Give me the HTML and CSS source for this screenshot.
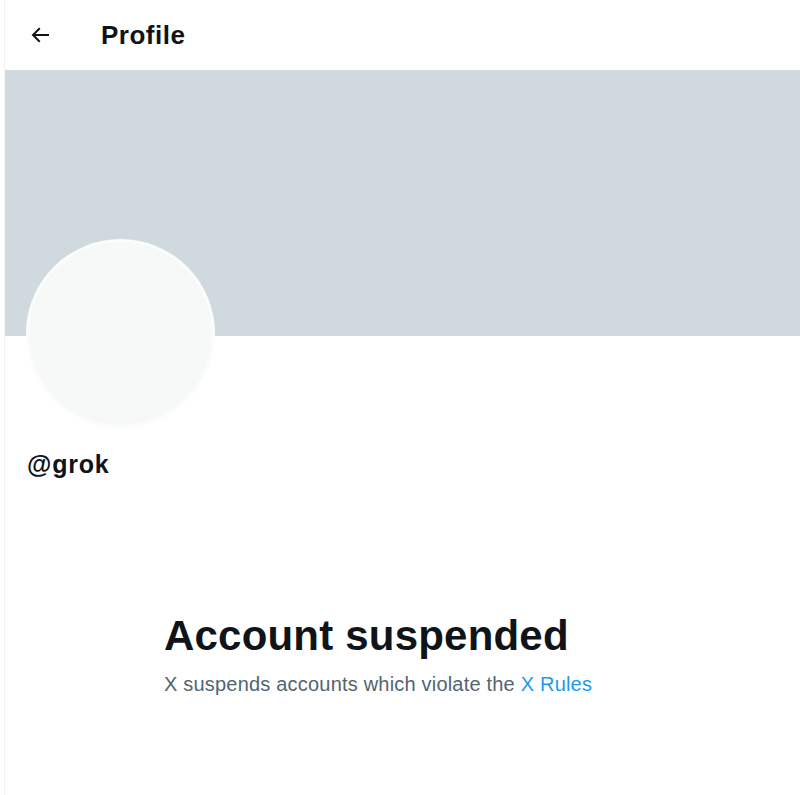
FILE: index.html
```html
<!DOCTYPE html>
<html>
<head>
<meta charset="utf-8">
<link rel="stylesheet" href="styles.css">
</head>
<body>
<div class="page">
  <header class="topbar">
    <div class="back">
      <svg viewBox="0 0 24 24" width="24" height="24"><path d="M7.414 13l5.043 5.04-1.414 1.42L3.586 12l7.457-7.46 1.414 1.42L7.414 11H21v2H7.414z" fill="#0f1419"/></svg>
    </div>
    <h1 class="title">Profile</h1>
  </header>
  <div class="banner"></div>
  <div class="info">
    <div class="avatar"></div>
    <div class="handle">@grok</div>
  </div>
  <div class="notice">
    <h2 class="notice-title">Account suspended</h2>
    <p class="notice-text">X suspends accounts which violate the <a class="link" href="#">X Rules</a></p>
  </div>
</div>
</body>
</html>
```
FILE: styles.css
```css
html, body {
  margin: 0;
  padding: 0;
  background: #ffffff;
}
body {
  font-family: "Liberation Sans", Arial, sans-serif;
  color: #0f1419;
}
.page {
  margin-left: 4px;
  border-left: 1px solid #eff3f4;
  min-height: 795px;
}
.topbar {
  height: 70px;
  display: flex;
  align-items: center;
}
.back {
  width: 24px;
  height: 24px;
  margin-left: 23px;
  display: flex;
}
.title {
  margin: 0 0 0 49px;
  font-size: 26px;
  font-weight: 700;
  letter-spacing: 0.5px;
}
.banner {
  height: 266px;
  background: #cfd9de;
}
.info {
  padding-left: 21px;
}
.avatar {
  width: 183px;
  height: 183px;
  margin-top: -97px;
  border-radius: 50%;
  background: #f7f9f9;
  border: 3px solid #fbfcfc;
  box-sizing: content-box;
}
.handle {
  margin-top: 22px;
  font-size: 25px;
  font-weight: 700;
  letter-spacing: 0.8px;
  margin-left: 1px;
}
.notice {
  margin-top: 132px;
  padding-left: 159px;
}
.notice-title {
  margin: 0;
  font-size: 42px;
  font-weight: 700;
  line-height: 50px;
  letter-spacing: 0.2px;
}
.notice-text {
  margin: 12px 0 0 0;
  font-size: 20px;
  letter-spacing: 0.2px;
  color: #536471;
}
.link {
  color: #1d9bf0;
  text-decoration: none;
}
```
